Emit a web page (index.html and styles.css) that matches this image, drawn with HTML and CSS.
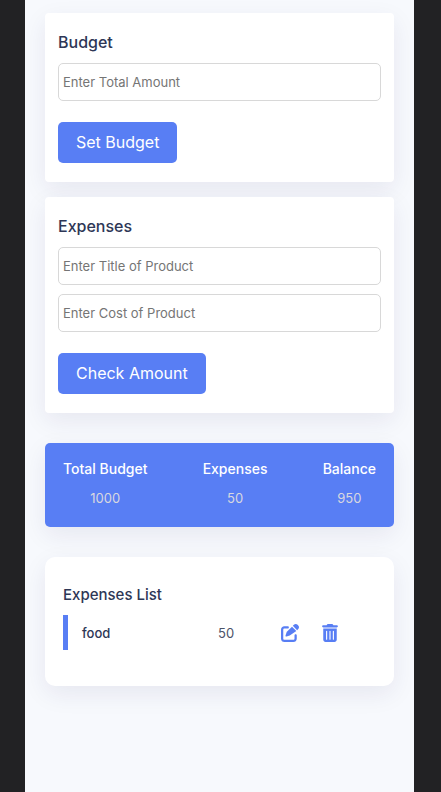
FILE: index.html
```html
<!DOCTYPE html>
<html lang="en">
<head>
<meta charset="utf-8">
<meta name="viewport" content="width=device-width, initial-scale=1">
<title>Budget</title>
<link rel="stylesheet" href="styles.css">
</head>
<body>
<main class="page">
  <form class="card">
    <label class="heading" for="total">Budget</label>
    <input class="field" id="total" type="text" inputmode="numeric" placeholder="Enter Total Amount">
    <button class="submit" type="button">Set Budget</button>
  </form>
  <form class="card">
    <label class="heading" for="product">Expenses</label>
    <input class="field" id="product" type="text" placeholder="Enter Title of Product">
    <input class="field" type="text" inputmode="numeric" aria-label="Cost" placeholder="Enter Cost of Product">
    <button class="submit" type="button">Check Amount</button>
  </form>
  <dl class="summary">
    <div><dt>Total Budget</dt><dd>1000</dd></div>
    <div><dt>Expenses</dt><dd>50</dd></div>
    <div><dt>Balance</dt><dd>950</dd></div>
  </dl>
  <section class="list">
    <h2 class="heading">Expenses List</h2>
    <div class="item">
      <span class="name">food</span>
      <span class="amount">50</span>
      <button class="icon" type="button" aria-label="Edit">
        <svg width="18" height="18" viewBox="0 0 512 512" fill="currentColor"><path d="M472 22c-29-29-76-29-105 0l-31 31 123 123 31-31c29-29 29-76 0-105zM313 76 173 216c-6 6-11 14-14 22l-30 89c-3 9-1 18 6 25 6 6 16 8 24 6l89-30c8-3 16-8 22-14l166-116zM96 64c-53 0-96 43-96 96v256c0 53 43 96 96 96h256c53 0 96-43 96-96v-96c0-18-14-32-32-32s-32 14-32 32v96c0 18-14 32-32 32H96c-18 0-32-14-32-32V160c0-18 14-32 32-32h96c18 0 32-14 32-32s-14-32-32-32z"/></svg>
      </button>
      <button class="icon" type="button" aria-label="Delete">
        <svg width="16" height="18" viewBox="0 0 448 512" fill="currentColor"><path fill-rule="evenodd" d="M135 18c6-11 17-18 29-18h120c12 0 23 7 29 18l7 14h96c18 0 32 14 32 32s-14 32-32 32H32C14 96 0 82 0 64s14-32 32-32h96zM32 128h384v320c0 35-29 64-64 64H96c-35 0-64-29-64-64zm80 80v224c0 21 32 21 32 0V208c0-21-32-21-32 0zm96 0v224c0 21 32 21 32 0V208c0-21-32-21-32 0zm96 0v224c0 21 32 21 32 0V208c0-21-32-21-32 0z"/></svg>
      </button>
    </div>
  </section>
</main>
</body>
</html>
```
FILE: styles.css
```css
* {
  box-sizing: border-box;
  margin: 0;
  padding: 0;
}

body {
  background: #222224;
  color: #2e3756;
  font: 13px/20px Inter, "Open Sans", sans-serif;
}

button,
input {
  font: inherit;
}

.page {
  min-height: 100vh;
  margin: 0 27px 0 25px;
  padding: 13px 20px;
  background: #f7f9fd;
}

.card,
.summary,
.list {
  box-shadow: 0 8px 24px rgba(35, 30, 90, 0.08);
}

.card {
  display: flex;
  flex-direction: column;
  align-items: flex-start;
  margin-bottom: 15px;
  padding: 17px 13px 19px;
  border-radius: 4px;
  background: #fff;
}

.heading {
  font-size: 16px;
  font-weight: 500;
  line-height: 24px;
}

.field {
  width: 100%;
  height: 38px;
  margin-top: 9px;
  padding: 0 4px;
  border: 1px solid #d8d8d8;
  border-radius: 5px;
  background: #fff;
  color: #2e3756;
}

.field::placeholder {
  color: #757575;
  opacity: 1;
}

.submit {
  margin-top: 21px;
  padding: 8px 18px;
  border: 0;
  border-radius: 5px;
  background: #587ef4;
  color: #fff;
  font-size: 16px;
  line-height: 25px;
}

.summary {
  display: flex;
  justify-content: space-between;
  margin: 30px 0;
  padding: 16px 18px 19px;
  border-radius: 5px;
  background: #587ef4;
  color: #fff;
  text-align: center;
}

.summary dt {
  font-size: 14px;
  font-weight: 500;
}

.summary dd {
  margin-top: 9px;
  color: #d8d8df;
}

.list {
  padding: 26px 18px 36px;
  border-radius: 10px;
  background: #fff;
}

.list .heading {
  font-size: 15px;
}

.item {
  display: grid;
  grid-template-columns: 136px 63px 41px auto;
  align-items: center;
  justify-content: start;
  height: 35px;
  margin-top: 8px;
  padding-left: 14px;
  border-left: 5px solid #587ef4;
}

.name {
  font-weight: 500;
}

.amount {
  color: #4c5368;
}

.icon {
  display: flex;
  border: 0;
  background: none;
  color: #587ef4;
}
```
